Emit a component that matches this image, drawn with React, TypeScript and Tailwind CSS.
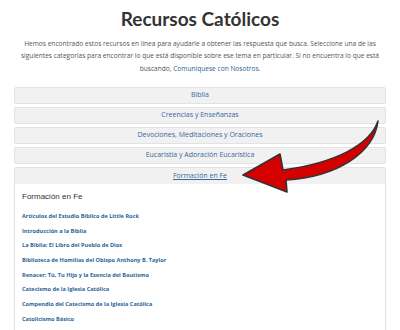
const categories = [
  'Biblia',
  'Creencias y Enseñanzas',
  'Devociones, Meditaciones y Oraciones',
  'Eucaristía y Adoración Eucarística',
]

const links = [
  'Artículos del Estudio Bíblico de Little Rock',
  'Introducción a la Biblia',
  'La Biblia: El Libro del Pueblo de Dios',
  'Biblioteca de Homilías del Obispo Anthony B. Taylor',
  'Renacer: Tú, Tu Hijo y la Esencia del Bautismo',
  'Catecismo de la Iglesia Católica',
  'Compendio del Catecismo de la Iglesia Católica',
  'Catolicismo Básico',
]

function Arrow() {
  return (
    <svg
      className="pointer-events-none absolute left-0 top-0"
      width="400"
      height="330"
      viewBox="0 0 400 330"
    >
      <path
        d="M378 121 C370 145 335 163 283 170 L280 154 L243 175 L287 192 L286 180 C337 177 374 153 378 121 Z"
        fill="#d40000"
        stroke="#333"
        strokeWidth="1.6"
        strokeLinejoin="round"
      />
    </svg>
  )
}

export default function App() {
  return (
    <div className="relative h-[330px] w-[400px] overflow-hidden bg-white font-['Open_Sans',sans-serif]">
      <h1 className="pt-[6px] text-center font-['Lato',sans-serif] text-[19px] leading-[26px] font-bold text-[#333]">
        Recursos Católicos
      </h1>
      <p className="mx-[20px] mt-[6px] text-center text-[6.6px] leading-[12.3px] text-[#555]">
        Hemos encontrado estos recursos en línea para ayudarle a obtener las respuesta que busca. Seleccione una de las
        siguientes categorías para encontrar lo que está disponible sobre ese tema en particular. Si no encuentra lo que está
        buscando, <span className="text-[#2a6496]">Comuníquese con Nosotros.</span>
      </p>

      <div className="mx-[14px] mt-[12px] flex w-[372px] flex-col gap-[3px]">
        {categories.map((c) => (
          <div
            key={c}
            className="flex h-[17px] items-center justify-center rounded-[2px] border border-[#e2e2e2] bg-[#f1f1f1] text-[7px] text-[#36689c]"
          >
            {c}
          </div>
        ))}
        <div className="rounded-[2px] border border-[#e2e2e2]">
          <div className="flex h-[16px] items-center justify-center bg-[#f1f1f1] text-[7px] text-[#36689c] underline">
            Formación en Fe
          </div>
          <div className="h-[200px] bg-white px-[7px] pt-[7px]">
            <h2 className="font-['Liberation_Sans',sans-serif] text-[8px] leading-[12px] text-[#333]">
              Formación en Fe
            </h2>
            <ul className="mt-[6px] flex flex-col">
              {links.map((l) => (
                <li key={l} className="h-[14.7px] text-[5.6px] leading-[14.7px] font-bold text-[#2a6496]">
                  {l}
                </li>
              ))}
            </ul>
          </div>
        </div>
      </div>
      <Arrow />
    </div>
  )
}
